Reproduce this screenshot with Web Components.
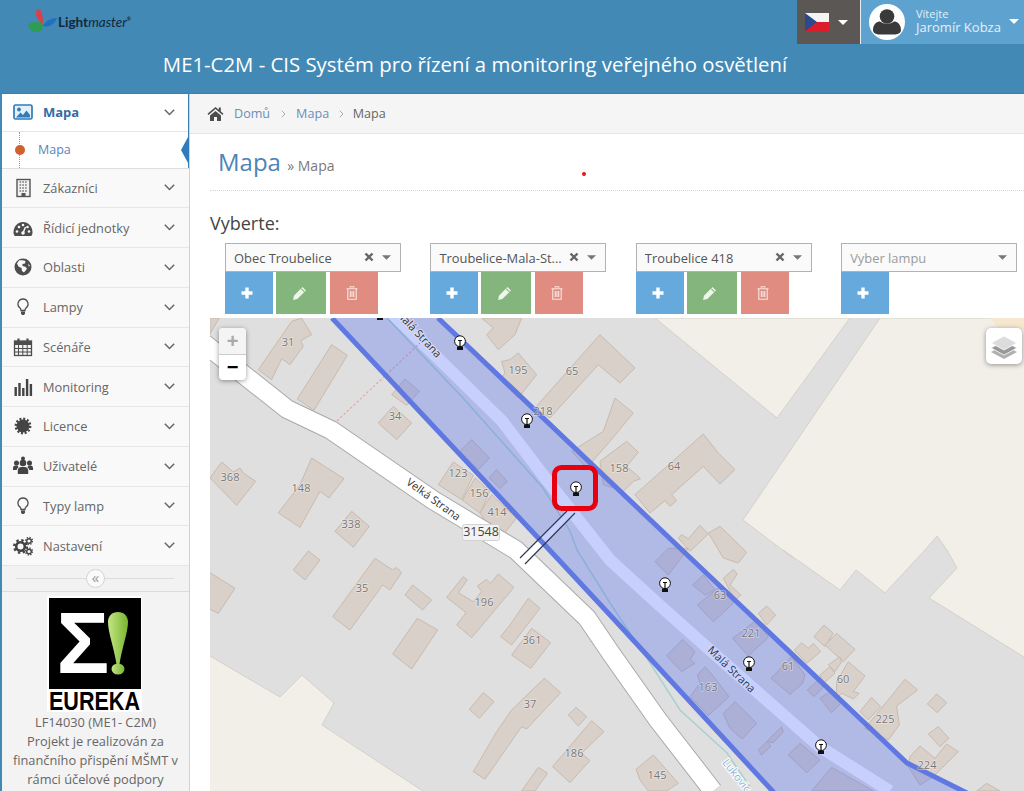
<!DOCTYPE html>
<html lang="cs">
<head>
<meta charset="utf-8">
<title>ME1-C2M</title>
<style>
  html, body { margin: 0; height: 100%; overflow: hidden; background: #fff; font-family: "Open Sans", sans-serif; }
  lm-app { height: 791px; }
</style>
</head>
<body>
<lm-app>
  <lm-header slot="header" title-text="ME1-C2M - CIS Systém pro řízení a monitoring veřejného osvětlení"></lm-header>
  <lm-sidebar slot="sidebar">
    <lm-nav-item icon="picture" active>Mapa</lm-nav-item>
    <lm-sub-item>Mapa</lm-sub-item>
    <lm-nav-item icon="building">Zákazníci</lm-nav-item>
    <lm-nav-item icon="dashboard">Řídicí jednotky</lm-nav-item>
    <lm-nav-item icon="globe">Oblasti</lm-nav-item>
    <lm-nav-item icon="bulb">Lampy</lm-nav-item>
    <lm-nav-item icon="calendar">Scénáře</lm-nav-item>
    <lm-nav-item icon="chart">Monitoring</lm-nav-item>
    <lm-nav-item icon="certificate">Licence</lm-nav-item>
    <lm-nav-item icon="users">Uživatelé</lm-nav-item>
    <lm-nav-item icon="bulb">Typy lamp</lm-nav-item>
    <lm-nav-item icon="gears">Nastavení</lm-nav-item>
    <lm-collapse></lm-collapse>
    <lm-eureka></lm-eureka>
  </lm-sidebar>
  <lm-main slot="main">
    <lm-breadcrumb></lm-breadcrumb>
    <lm-title></lm-title>
    <lm-picker-row></lm-picker-row>
    <lm-map></lm-map>
  </lm-main>
</lm-app>

<script>
const ICONS = {
  picture: `<rect x="1" y="3" width="18" height="14" rx="1.5" fill="#e4eff8" stroke="currentColor" stroke-width="1.7"/><circle cx="6" cy="7.5" r="1.9" fill="currentColor"/><path d="M3 15.5 7.5 10.5 10 13 13.5 8.5 17 13V15.5Z" fill="currentColor"/>`,
  building: `<rect x="4" y="1.5" width="13" height="17" fill="#f2f2f2" stroke="#555" stroke-width="1.4"/><path d="M6.5 4h8M6.5 7h8M6.5 10h8M6.5 13h8" stroke="#777" stroke-width="1.6" stroke-dasharray="1.6 1.2"/><rect x="8.5" y="15" width="4" height="3.5" fill="#555"/>`,
  dashboard: `<path d="M.5 14.5C.5 8.5 4.8 4 10 4s9.500 4.500 9.500 10.500c0 1.500-.5 2.700-1.300 3.500H1.800C1 17.200.5 16 .5 14.500Z" fill="#4d4d4d"/><circle cx="4" cy="13.500" r="1.300" fill="#f9f9f9"/><circle cx="6" cy="9" r="1.300" fill="#f9f9f9"/><circle cx="10" cy="7" r="1.300" fill="#f9f9f9"/><circle cx="16" cy="13.500" r="1.300" fill="#f9f9f9"/><circle cx="14.500" cy="9" r="1.300" fill="#f9f9f9"/><path d="M10 15 12.500 9" stroke="#f9f9f9" stroke-width="1.500"/><circle cx="10" cy="15" r="1.800" fill="#f9f9f9"/>`,
  globe: `<circle cx="10" cy="10" r="8.500" fill="#4d4d4d"/><path d="M6 3.500C8 3 10.500 3 12.500 4L12 6.500 9.500 7 9.500 9 12.500 9.800 14 11.800 11 15.500 9 14 8.500 11 5.500 9.500 4 6.500Z" fill="#f9f9f9"/><path d="M15.500 6.500 17 9 15.500 9.500Z" fill="#f9f9f9"/>`,
  bulb: `<path d="M10 2a5 5 0 0 0-3 9c.8.7 1 1.500 1 2.500h4c0-1 .2-1.800 1-2.500a5 5 0 0 0-3-9Z" fill="none" stroke="#4d4d4d" stroke-width="1.300"/><path d="M8 14.500h4v2l-1 1.500H9l-1-1.500Z" fill="#4d4d4d"/>`,
  calendar: `<rect x="1.500" y="4" width="17" height="14.500" fill="#f2f2f2" stroke="#4d4d4d" stroke-width="1.300"/><rect x="1.500" y="4" width="17" height="4" fill="#4d4d4d"/><path d="M1.500 11.500h17M1.500 15h17M5.500 8v10.500M9.800 8v10.500M14.200 8v10.500" stroke="#4d4d4d" stroke-width="1"/><path d="M5.500 1.500V5M14.500 1.500V5" stroke="#4d4d4d" stroke-width="2.200"/>`,
  chart: `<rect x="1.500" y="10" width="2.400" height="9" fill="#444"/><rect x="5.300" y="6" width="2.400" height="13" fill="#444"/><rect x="9.100" y="11" width="2.400" height="8" fill="#444"/><rect x="12.900" y="2" width="2.400" height="17" fill="#444"/><rect x="16.700" y="7" width="2.400" height="12" fill="#444"/>`,
  certificate: `<circle cx="10" cy="10" r="6.500" fill="#444"/><circle cx="10" cy="10" r="7.200" fill="none" stroke="#444" stroke-width="2.400" stroke-dasharray="2 1.770"/>`,
  users: `<circle cx="10" cy="7" r="3.300" fill="#444"/><path d="M4.800 18v-3.500c0-2.200 1.700-3.500 3.200-3.500h4c1.500 0 3.200 1.300 3.200 3.500V18Z" fill="#444"/><circle cx="3.500" cy="7" r="2.500" fill="#444"/><circle cx="16.500" cy="7" r="2.500" fill="#444"/><path d="M0 14v-2c0-1.500 1-2.500 2.300-2.500h2.400c.2 1 .6 1.300 1.100 1.800-1.300.6-2 1.700-2 2.700Z" fill="#444"/><path d="M20 14v-2c0-1.500-1-2.500-2.300-2.500h-2.400c-.2 1-.6 1.300-1.100 1.800 1.300.6 2 1.700 2 2.700Z" fill="#444"/><circle cx="10" cy="2.500" r="2" fill="#444"/>`,
  gears: `<circle cx="7.500" cy="10.500" r="4.300" fill="none" stroke="#444" stroke-width="2.600"/><circle cx="7.500" cy="10.500" r="6.300" fill="none" stroke="#444" stroke-width="2.400" stroke-dasharray="2.400 2.550"/><circle cx="16" cy="5" r="2.300" fill="none" stroke="#444" stroke-width="1.400"/><circle cx="16" cy="5" r="3.500" fill="none" stroke="#444" stroke-width="1.400" stroke-dasharray="1.300 1.450"/><circle cx="16" cy="15.500" r="2.300" fill="none" stroke="#444" stroke-width="1.400"/><circle cx="16" cy="15.500" r="3.500" fill="none" stroke="#444" stroke-width="1.400" stroke-dasharray="1.300 1.450"/>`
};

const CARET = (color, w = 10, h = 5) => `<svg width="${w}" height="${h}" viewBox="0 0 10 5"><path d="M0 0h10L5 5Z" fill="${color}"/></svg>`;

class LmApp extends HTMLElement {
  constructor() {
    super();
    this.shadowDOM = this.attachShadow({ mode: 'open' });
    this.shadowDOM.innerHTML = `
      <style>
        :host { display: grid; grid-template-columns: 190px 1fr; grid-template-rows: 94px 1fr; width: 1024px; overflow: hidden; }
        .top { grid-column: 1 / 3; }
        .side, .content { min-height: 0; overflow: hidden; }
      </style>
      <div class="top"><slot name="header"></slot></div>
      <div class="side"><slot name="sidebar"></slot></div>
      <div class="content"><slot name="main"></slot></div>`;
  }
}

class LmHeader extends HTMLElement {
  constructor() {
    super();
    this.shadowDOM = this.attachShadow({ mode: 'open' });
  }

  connectedCallback() {
    this.shadowDOM.innerHTML = `
      <style>
        :host { display: flex; flex-direction: column; height: 94px; box-sizing: border-box; background: #4389b6; border-bottom: 1px solid #3a7fae; color: #fff; font-family: "Open Sans", sans-serif; }
        .bar { display: flex; height: 44px; }
        .logo { display: flex; align-items: flex-start; padding: 8px 0 0 27px; flex: 1; }
        .word { font: 700 13.5px/1 "Lato", sans-serif; color: #13283a; margin: 8px 0 0 -1px; }
        .word i { font-weight: 400; }
        .word sup { font-size: 5px; font-style: normal; vertical-align: 6px; }
        .flag { width: 64px; background: #5b5755; display: flex; align-items: center; gap: 9px; padding-left: 8px; box-sizing: border-box; border-right: 1px solid #e6eef4; }
        .user { width: 163px; background: #5ea3d0; display: flex; align-items: center; padding-left: 8px; box-sizing: border-box; position: relative; }
        .who { margin-left: 11px; color: #e3f0f8; font-size: 11px; line-height: 13px; padding-bottom: 2px; }
        .who b { display: block; font-weight: 400; font-size: 13px; line-height: 15px; }
        .user .caret { position: absolute; right: 5px; top: 18px; line-height: 0; }
        h1 { margin: 0; flex: 1; font-size: 20.35px; font-weight: 400; text-align: center; line-height: 41px; padding-right: 74px; white-space: nowrap; }
      </style>
      <div class="bar">
        <div class="logo">
          <svg width="32" height="30" viewBox="0 0 32 30">
            <path d="M11 1c3-.5 5 5 5 15-4-2-7-6-7-11 0-2 .8-3.700 2-4Z" fill="#d9404e"/>
            <path d="M16 18c2-5 8-8 14-8-2 6-8 10-14 8Z" fill="#1f70c2"/>
            <path d="M1 17c4-4 12-4 15-1 1 5-3 9-8 8-3-.5-6-3-7-7Z" fill="#2e9c56"/>
          </svg>
          <span class="word">Light<i>master</i><sup>®</sup></span>
        </div>
        <div class="flag">
          <svg width="24" height="18" viewBox="0 0 24 18"><rect width="24" height="9" fill="#f4f4f4"/><rect y="9" width="24" height="9" fill="#dc1c2a"/><path d="M0 0 12 9 0 18Z" fill="#2a4a8c"/></svg>
          ${CARET('#fff', 10, 5)}
        </div>
        <div class="user">
          <svg width="36" height="36" viewBox="0 0 36 36"><circle cx="18" cy="18" r="18" fill="#fff"/><circle cx="18" cy="12.500" r="7.300" fill="#3a3a3a"/><path d="M4 26c0-6 4-8.500 7-8.500 2 1.500 4.500 2.200 7 2.200s5-.7 7-2.200c3 0 7 2.500 7 8.500 0 3-3 4.500-7 4.500H11c-4 0-7-1.500-7-4.500Z" fill="#3a3a3a"/></svg>
          <div class="who">Vítejte<b>Jaromír Kobza</b></div>
          <span class="caret">${CARET('#fff', 10, 5)}</span>
        </div>
      </div>
      <h1>${this.getAttribute('title-text')}</h1>`;
  }
}

class LmSidebar extends HTMLElement {
  constructor() {
    super();
    this.shadowDOM = this.attachShadow({ mode: 'open' });
    this.shadowDOM.innerHTML = `
      <style>
        :host { display: flex; flex-direction: column; height: 697px; box-sizing: border-box; background: #f3f3f3; border-left: 2px solid #4389b6; border-right: 1px solid #cfd3d6; font-family: "Open Sans", sans-serif; overflow: hidden; }
      </style>
      <slot></slot>`;
  }
}

class LmNavItem extends HTMLElement {
  constructor() {
    super();
    this.shadowDOM = this.attachShadow({ mode: 'open' });
  }

  connectedCallback() {
    const active = this.hasAttribute('active');
    this.shadowDOM.innerHTML = `
      <style>
        :host { display: flex; align-items: center; flex: none; height: ${active ? '37.5px' : '39.75px'}; box-sizing: border-box; background: ${active ? '#fff' : '#f9f9f9'}; border-bottom: 1px solid #e6e6e6; color: #666; font-size: 12.8px; }
        :host([active]) { color: #2f6ea6; font-weight: 700; font-size: 13px; }
        .icon { width: 41px; display: flex; justify-content: center; box-sizing: border-box; color: #2f7cbc; }
        .label { flex: 1; }
        .chev { margin-right: 14px; line-height: 0; }
      </style>
      <span class="icon"><svg width="20" height="20" viewBox="0 0 20 20">${ICONS[this.getAttribute('icon')]}</svg></span>
      <span class="label"><slot></slot></span>
      <svg class="chev" width="11" height="7" viewBox="0 0 11 7"><path d="M.8.8 5.500 5.500 10.200.8" fill="none" stroke="#666" stroke-width="1.500"/></svg>`;
  }
}

class LmSubItem extends HTMLElement {
  constructor() {
    super();
    this.shadowDOM = this.attachShadow({ mode: 'open' });
    this.shadowDOM.innerHTML = `
      <style>
        :host { display: flex; align-items: center; flex: none; position: relative; height: 37px; box-sizing: border-box; background: #fff; border-bottom: 1px solid #dedede; color: #5a85b5; font-size: 12.5px; padding-left: 36px; }
        .trail { position: absolute; left: 17px; top: 0; bottom: 0; border-left: 1px dotted #999; }
        .dot { position: absolute; left: 13px; top: 13px; width: 10px; height: 10px; border-radius: 50%; background: #d0622f; }
        .tip { position: absolute; right: -1px; top: 2px; width: 9px; height: 33px; background: #2f7cbc; clip-path: polygon(100% 0, 0 50%, 100% 100%); }
        .edge { position: absolute; right: -1px; top: -38px; bottom: 0; border-right: 2px solid #3a7fae; }
      </style>
      <span class="trail"></span><span class="dot"></span><span class="edge"></span><span class="tip"></span>
      <slot></slot>`;
  }
}

class LmCollapse extends HTMLElement {
  constructor() {
    super();
    this.shadowDOM = this.attachShadow({ mode: 'open' });
    this.shadowDOM.innerHTML = `
      <style>
        :host { display: flex; position: relative; align-items: center; justify-content: center; height: 26px; flex: none; box-sizing: border-box; border-bottom: 1px solid #dcdcdc; background: #f2f2f2; }
        .line { position: absolute; left: 14px; right: 15px; top: 12px; border-top: 1px solid #dcdcdc; }
        .btn { position: relative; width: 19px; height: 19px; box-sizing: border-box; border-radius: 50%; background: #fafafa; border: 1px solid #d4d4d4; color: #9b9b9b; font: 15px/14px "Open Sans", sans-serif; text-align: center; }
      </style>
      <span class="line"></span><span class="btn">«</span>`;
  }
}

class LmEureka extends HTMLElement {
  constructor() {
    super();
    this.shadowDOM = this.attachShadow({ mode: 'open' });
    this.shadowDOM.innerHTML = `
      <style>
        :host { display: block; flex: none; padding-top: 4px; text-align: center; color: #666; font-size: 12.8px; line-height: 19px; background: #f3f3f3; }
        svg { display: block; margin: 0 0 -5px 45px; }
        p { margin: 1px 0 0; white-space: nowrap; position: relative; }
      </style>
      <svg width="95" height="121" viewBox="0 0 95 121">
        <defs><linearGradient id="g" x1="0" x2="1"><stop offset="0" stop-color="#c3e585"/><stop offset="1" stop-color="#79b52f"/></linearGradient></defs>
        <rect width="95" height="116" fill="#fff"/>
        <rect x="2" y="2" width="92" height="91" fill="#000"/>
        <text x="9.500" y="77" font-family="Liberation Sans" font-weight="700" font-size="88" fill="#fff">Σ</text>
        <path d="M61 26c0-6 4-10 10-10s10 4 10 10c0 10-6 26-8.500 42h-3C67 52 61 36 61 26Z" fill="url(#g)"/>
        <ellipse cx="71" cy="73" rx="6.500" ry="5.500" fill="url(#g)"/>
        <text x="2" y="114" font-family="Liberation Sans" font-weight="700" font-size="25" textLength="91" lengthAdjust="spacingAndGlyphs" fill="#000">EUREKA</text>
      </svg>
      <p>LF14030 (ME1- C2M)<br>Projekt je realizován za<br>finančního přispění MŠMT v<br>rámci účelové podpory</p>`;
  }
}

class LmMain extends HTMLElement {
  constructor() {
    super();
    this.shadowDOM = this.attachShadow({ mode: 'open' });
    this.shadowDOM.innerHTML = `
      <style>
        :host { display: flex; flex-direction: column; height: 697px; font-family: "Open Sans", sans-serif; position: relative; overflow: hidden; }
        .mark { position: absolute; left: 392px; top: 78px; width: 4px; height: 4px; border-radius: 50%; background: #e0131d; }
      </style>
      <slot></slot><span class="mark"></span>`;
  }
}

class LmBreadcrumb extends HTMLElement {
  constructor() {
    super();
    this.shadowDOM = this.attachShadow({ mode: 'open' });
    this.shadowDOM.innerHTML = `
      <style>
        :host { display: flex; flex: none; align-items: center; height: 40px; box-sizing: border-box; background: #f5f5f5; border-bottom: 1px solid #e6e6e6; padding-left: 17px; font-size: 12.6px; color: #666; }
        a { color: #6b8fb5; text-decoration: none; }
        svg.home { margin-right: 10px; }
        svg.sep { margin: 0 10.5px; }
        svg.last { margin: 0 9px 0 9.5px; }
      </style>
      <svg class="home" width="17" height="15" viewBox="0 0 17 15"><path d="M8.500 1 .5 7.800l1 1.100L8.500 3l7 5.900 1-1.100-2.700-2.300V1.500h-2v2.300Z" fill="#4d4d4d"/><path d="M3 9.500 8.500 5 14 9.500V15h-4v-4H7v4H3Z" fill="#4d4d4d"/></svg>
      <a>Domů</a>
      <svg class="sep" width="5" height="8" viewBox="0 0 5 8"><path d="M.7.7 4 4 .7 7.300" fill="none" stroke="#aaa"/></svg>
      <a>Mapa</a>
      <svg class="sep last" width="5" height="8" viewBox="0 0 5 8"><path d="M.7.7 4 4 .7 7.300" fill="none" stroke="#aaa"/></svg>
      <span>Mapa</span>`;
  }
}

class LmTitle extends HTMLElement {
  constructor() {
    super();
    this.shadowDOM = this.attachShadow({ mode: 'open' });
    this.shadowDOM.innerHTML = `
      <style>
        :host { display: block; flex: none; margin-left: 20px; }
        .head { height: 57px; box-sizing: border-box; border-bottom: 1px dotted #d8d8d8; padding: 10px 0 0 8px; font-size: 24px; line-height: 36px; color: #4c84b8; white-space: nowrap; }
        small { font-size: 14px; color: #7a7a7a; }
        .pick { font-size: 18px; line-height: 24px; color: #444; margin-top: 20px; height: 32px; }
      </style>
      <div class="head">Mapa <small>» Mapa</small></div>
      <div class="pick">Vyberte:</div>`;
  }
}

class LmPickerRow extends HTMLElement {
  constructor() {
    super();
    this.shadowDOM = this.attachShadow({ mode: 'open' });
    const rows = [
      ['Obec Troubelice', false],
      ['Troubelice-Mala-St...', false],
      ['Troubelice 418', false],
      ['Vyber lampu', true]
    ];
    this.shadowDOM.innerHTML = `
      <style>
        :host { display: grid; flex: none; grid-template-columns: repeat(4, 205.4px); margin-left: 35px; height: 71px; }
      </style>
      ${rows.map(([text, empty]) => `<lm-picker text="${text}" ${empty ? 'empty' : ''}></lm-picker>`).join('')}`;
  }
}

class LmPicker extends HTMLElement {
  constructor() {
    super();
    this.shadowDOM = this.attachShadow({ mode: 'open' });
  }

  connectedCallback() {
    const empty = this.hasAttribute('empty');
    const clear = `<svg class="clear" width="10" height="10" viewBox="0 0 10 10"><path d="M1.500 1.500l7 7M8.500 1.500l-7 7" stroke="#666" stroke-width="2.400"/></svg>`;
    this.shadowDOM.innerHTML = `
      <style>
        :host { display: block; width: 176px; font-family: "Open Sans", sans-serif; }
        .box { display: flex; align-items: center; height: 29px; box-sizing: border-box; background: #fafafa; border: 1px solid #b2b2b2; padding: 0 9px 0 8px; font-size: 12.9px; color: ${empty ? '#9a9a9a' : '#555'}; white-space: nowrap; }
        .text { flex: 1; overflow: hidden; }
        .clear { margin: -2px 8px 0 0; flex: none; }
        .caret { line-height: 0; }
        .btns { display: flex; height: 42px; }
        .btn { display: flex; align-items: center; justify-content: center; height: 42px; box-sizing: border-box; padding-right: 4px; }
        .add { width: 48px; background: #65a9dd; }
        .edit { width: 50px; margin-left: 3px; background: #84b57d; }
        .del { width: 48px; margin-left: 4px; background: #e08c80; }
      </style>
      <div class="box">
        <span class="text">${this.getAttribute('text')}</span>
        ${empty ? '' : clear}
        <span class="caret">${CARET('#777', 9, 5)}</span>
      </div>
      <div class="btns">
        <span class="btn add"><svg width="12" height="12" viewBox="0 0 12 12"><path d="M6 .5v11M.5 6h11" stroke="#fff" stroke-width="3.400"/></svg></span>
        ${empty ? '' : `
        <span class="btn edit"><svg width="15" height="15" viewBox="0 0 14 14"><path d="M9.800 1 13 4.200 5 12.200 1 13l.8-4Z" fill="#eef6ea"/><path d="M8.600 2.400l3 3" stroke="#84b57d"/></svg></span>
        <span class="btn del"><svg width="12" height="14" viewBox="0 0 12 14"><path d="M4.200 1.800V.8h3.600v1M.5 2.800h11M1.800 2.800v10.500h8.400V2.800M4.300 5v6M6 5v6M7.700 5v6" fill="none" stroke="#f8e6e2" stroke-width="1.100"/></svg></span>`}
      </div>`;
  }
}

// coordinates are read off 3x crops: each list is [origin x, origin y, polygons]
const BUILDINGS = [
  [210, 318, [
    '145,155 245,10 275,0 305,50 272,68 280,85 240,140 215,122 185,185',
    '262,243 365,80 412,112 312,277',
    '0,0 28,0 0,48',
    '505,315 550,265 605,315 560,365',
    '545,230 585,183 628,220 590,262',
    '875,130 900,125 925,105 980,170 925,240 870,185 885,165',
    '975,270 1130,95 1170,50 1275,150 1230,195 1165,140 1020,300',
    '1085,400 1180,340 1215,240 1270,285 1200,370 1130,450',
    '685,500 730,432 790,472 755,545',
    '757,547 795,480 840,520 810,585',
    '810,585 845,530 920,600 880,650 855,650',
    '750,400 785,365 838,420 805,455',
    '838,480 860,455 892,490 870,512',
    '0,480 35,432 70,462 90,450 100,465 137,490 80,562',
    '205,585 270,500 305,420 402,482 357,540 330,520 270,628',
    '375,640 425,580 478,625 430,688',
    '815,0 935,0 915,50 865,95 830,50 850,30'
  ]],
  [210, 550, [
    '-5,65 75,115 25,190 -5,175',
    '250,60 295,3 330,30 285,90',
    '368,200 495,25 548,60 560,52 575,68 540,120 518,105 420,240',
    '585,135 608,105 665,150 638,180',
    '548,312 622,205 683,240 605,357',
    '710,142 760,80 772,90 745,128 790,155 815,125 802,108 830,88 842,100 865,72 912,112 785,263 740,225 768,188',
    '872,260 900,225 955,145 990,175 905,285',
    '905,315 965,235 1022,278 962,355',
    '790,665 860,545 905,480 1003,385 1052,428 950,537 935,530 825,688',
    '778,478 820,428 852,455 808,505',
    '1075,495 1098,472 1130,500 1105,528',
    '1028,650 1145,512 1182,545 1115,610 1140,632 1080,698',
    '935,723 985,652 1013,670 975,723'
  ]],
  [610, 318, [
    '-30,430 50,370 85,403 50,445 92,482 70,490 40,520 -20,500',
    '75,530 280,348 325,405 375,455 330,498 280,445 185,530 200,548 180,565 165,548 120,585',
    '205,660 215,650 235,662 270,622 295,648 240,700',
    '295,645 330,625 410,703 385,735 340,720'
  ]],
  [610, 550, [
    '135,35 175,-5 235,-5 175,75',
    '248,105 280,75 315,120 285,135',
    '262,165 335,105 370,160 310,215',
    '340,85 370,58 382,72 360,105 393,135 375,150',
    '445,190 470,168 497,195 470,225',
    '368,265 440,210 475,262 415,318',
    '483,385 545,320 585,375 578,400 540,433',
    '553,300 575,278 595,295 610,280 632,305 590,340',
    '612,260 642,225 670,250 645,290',
    '645,285 680,250 735,298 700,335',
    '655,345 690,320 695,335 675,365',
    '630,375 660,350 675,370 640,400',
    '592,420 625,390 640,412 612,440',
    '630,445 660,425 692,460 665,488',
    '680,395 715,335 765,378 730,425 748,430 730,447 695,430 680,445',
    '750,485 785,442 812,470 775,510',
    '765,535 885,388 923,420 860,468 868,525 835,570',
    '952,462 980,432 1010,458 982,488',
    '955,552 985,530 1017,565 990,590',
    '900,620 930,588 975,625 1010,582 1045,605 970,680 930,705 895,650',
    '1100,723 1130,700 1170,723',
    '170,317 218,268 255,305 240,330 255,340 215,365',
    '240,440 270,400 262,375 285,350 315,385 357,440 295,497',
    '340,490 375,455 440,520 397,567 360,535',
    '470,575 515,530 520,545 490,578',
    '445,600 470,575 483,588 455,615',
    '535,615 570,580 630,630 590,668',
    '605,723 665,652 790,723',
    '78,658 130,615 170,660 205,700 170,723 115,723 90,690'
  ]]
];

const NUMBERS = [
  ['31', 288, 343], ['195', 518, 371], ['65', 572, 372], ['218', 543, 412], ['34', 395, 417],
  ['368', 230, 478], ['148', 301, 489], ['123', 458, 474], ['156', 479, 494], ['414', 497, 513],
  ['338', 351, 525], ['158', 619, 469], ['64', 674, 467], ['63', 720, 596], ['221', 751, 634],
  ['61', 788, 667], ['60', 843, 680], ['163', 708, 688], ['225', 885, 720], ['224', 927, 766],
  ['145', 657, 776], ['35', 362, 589], ['196', 484, 603], ['361', 532, 641], ['37', 530, 705],
  ['186', 574, 754]
];

const LAMPS = [[460, 343], [527, 421], [576, 489], [665, 585], [749, 664], [821, 747]];

class LmMap extends HTMLElement {
  constructor() {
    super();
    this.shadowDOM = this.attachShadow({ mode: 'open' });
    this.render();
  }

  render() {
    const buildings = BUILDINGS.map(([x, y, polys]) => `
      <g transform="translate(${x} ${y}) scale(.3333)">
        ${polys.map((p) => `<polygon class="b" points="${p}"/>`).join('')}
      </g>`).join('');
    const numbers = NUMBERS.map(([t, x, y]) => `<text class="n" x="${x}" y="${y}">${t}</text>`).join('');
    const lamps = LAMPS.map(([x, y]) => `<use href="#lamp" x="${x}" y="${y}"/>`).join('');
    const road = '200,340 287,409 331,430 433,500 516,550 587,618 610,652 658,720 713,791';
    const street = '378,300 451,371 502,421 543,475 610,560 657,603 710,650 763,697 820,747 890,791';
    this.shadowDOM.innerHTML = `
      <style>
        :host { display: block; position: relative; flex: none; margin-left: 20px; margin-top: 4px; width: 814px; height: 473px; overflow: hidden; background: #e0dfdf; font-family: "Open Sans", sans-serif; }
        svg.map { display: block; }
        .b { fill: #d9d0c9; stroke: #c7bbb0; stroke-width: 1; vector-effect: non-scaling-stroke; }
        .n { font: 11px "Open Sans", sans-serif; fill: #777; text-anchor: middle; dominant-baseline: middle; paint-order: stroke; stroke: rgba(255,255,255,.45); stroke-width: 1.500px; }
        .r { font: 11px "Open Sans", sans-serif; text-anchor: middle; dominant-baseline: middle; paint-order: stroke; stroke-width: 2px; }
        .zoom { position: absolute; left: 9px; top: 10px; width: 27px; height: 52px; background: #fff; border-radius: 4px; box-shadow: 0 1px 5px rgba(0,0,0,.4); display: flex; flex-direction: column; }
        .zoom span { flex: 1; display: flex; align-items: center; justify-content: center; font: 700 20px/1 "Liberation Sans", sans-serif; color: #000; }
        .zoom span:first-child { color: #aaa; background: #f4f4f4; border-bottom: 1px solid #ccc; border-radius: 4px 4px 0 0; }
        .layers { position: absolute; right: 2px; top: 10px; width: 36px; height: 36px; background: #fff; border-radius: 5px; box-shadow: 0 1px 5px rgba(0,0,0,.4); display: flex; align-items: center; justify-content: center; }
      </style>
      <svg class="map" width="814" height="473" viewBox="210 318 814 473">
        <defs>
          <symbol id="lamp" overflow="visible">
            <g>
              <path d="M-3 3.500h6v3.500h-6Z" fill="#111"/>
              <circle cy="-1.800" r="5.400" fill="#fff" stroke="#111" stroke-width="1"/>
              <path d="M-2-2.500h4M0-2.500v6" stroke="#111" stroke-width="1.200" fill="none"/>
            </g>
          </symbol>
        </defs>
        <rect x="210" y="318" width="814" height="473" fill="#e0dfdf"/>
        <g fill="#f2efe9" stroke="#d4d1cb">
          <polygon points="655,318 850,318 777,418"/>
          <polygon points="880,318 1030,318 1030,657 1024,657 929,598 957,568 947,550 937,536 925,550 885,593 856,570 840,590 783,550 793,558 743,520"/>
          <polygon points="205,653 280,697 302,675 334,703 322,725 432,797 205,797"/>
        </g>
        <polygon points="990,318 1000,330 1030,330 1030,318" fill="#f6e7d0"/>
        ${buildings}
        <polyline points="${road}" fill="none" stroke="#a9a9a9" stroke-width="20" stroke-linejoin="round"/>
        <polyline points="${road}" fill="none" stroke="#fff" stroke-width="18" stroke-linejoin="round"/>
        <polyline points="${street}" fill="none" stroke="#fff" stroke-width="12" stroke-linejoin="round"/>
        <polyline points="387,318 463,398 543,488 570,531 577,550 610,603 650,663 680,710 727,753 750,787" fill="none" stroke="#a8d0d0" stroke-width="1.500"/>
        <polyline points="337,421 420,343" fill="none" stroke="#e8a8a0" stroke-width="1.200" stroke-dasharray="2.500 2"/>
        <polygon points="567,511 575,513 525,564 520,558" fill="#fff"/>
        <polygon points="332,318 438,318 907,763 975,797 778,797" fill="rgba(70,100,245,.3)"/>
        <polyline points="332,318 557,558 610,615 778,797" fill="none" stroke="#5f78e2" stroke-width="5"/>
        <polyline points="438,318 682,550 907,763 975,797" fill="none" stroke="#5f78e2" stroke-width="5"/>
        <path d="M567 511 520 558M575 513 525 564" stroke="#2f3a55" stroke-width="1.200" fill="none"/>
        ${numbers}
        <text class="r" transform="translate(433 500) rotate(36)" fill="#333" stroke="#fff">Velká Strana</text>
        <text class="r" transform="translate(418 334) rotate(47)" fill="#333" stroke="#d6dcf9">Malá Strana</text>
        <text class="r" transform="translate(731 670) rotate(44)" fill="#26345f" stroke="#cdd5fb">Malá Strana</text>
        <text class="r" transform="translate(736 776) rotate(52)" fill="#8fb3d9" stroke="#fff" font-style="italic">Lukovic</text>
        <g transform="translate(462 524)">
          <rect x=".5" y=".5" width="37" height="16" rx="2" fill="#f2f2f2" stroke="#d2d2d2"/>
          <text x="19" y="9" font-family="Open Sans" font-size="12.500" fill="#444" text-anchor="middle" dominant-baseline="middle">31548</text>
        </g>
        <rect x="377" y="318" width="6" height="2" fill="#111"/>
        ${lamps}
        <rect x="554.500" y="467.500" width="41" height="41" rx="7" fill="none" stroke="#e9000e" stroke-width="5"/>
      </svg>
      <div class="zoom"><span>+</span><span>−</span></div>
      <div class="layers">
        <svg width="28" height="28" viewBox="0 0 28 28">
          <path d="M14 13 27 20 14 27 1 20Z" fill="#b0b0b0"/>
          <path d="M14 9 27 16 14 23 1 16Z" fill="#999" stroke="#fff" stroke-width=".8"/>
          <path d="M14 4 27 11 14 18 1 11Z" fill="#dcdcdc" stroke="#fff" stroke-width=".8"/>
        </svg>
      </div>`;
  }
}

customElements.define('lm-app', LmApp);
customElements.define('lm-header', LmHeader);
customElements.define('lm-sidebar', LmSidebar);
customElements.define('lm-nav-item', LmNavItem);
customElements.define('lm-sub-item', LmSubItem);
customElements.define('lm-collapse', LmCollapse);
customElements.define('lm-eureka', LmEureka);
customElements.define('lm-main', LmMain);
customElements.define('lm-breadcrumb', LmBreadcrumb);
customElements.define('lm-title', LmTitle);
customElements.define('lm-picker-row', LmPickerRow);
customElements.define('lm-picker', LmPicker);
customElements.define('lm-map', LmMap);
</script>
</body>
</html>
